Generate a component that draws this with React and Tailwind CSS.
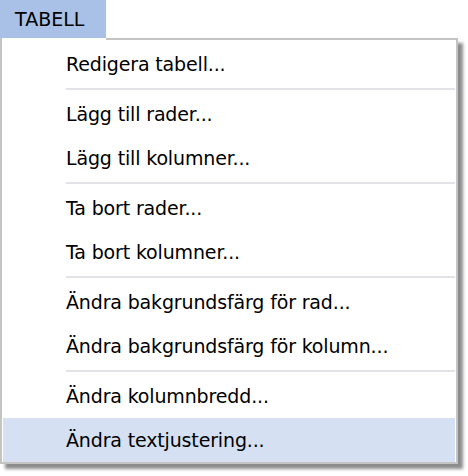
import React from "react";

const groups = [
  ["Redigera tabell..."],
  ["Lägg till rader...", "Lägg till kolumner..."],
  ["Ta bort rader...", "Ta bort kolumner..."],
  ["Ändra bakgrundsfärg för rad...", "Ändra bakgrundsfärg för kolumn..."],
  ["Ändra kolumnbredd...", "Ändra textjustering..."],
];

export default function App() {
  return (
    <div
      className="w-[468px] h-[476px] bg-white text-black"
      style={{ fontFamily: '"DejaVu Sans", sans-serif' }}
    >
      <div className="w-[106px] h-[38px] bg-[#a9c1e6] flex items-center pl-[15px] text-[19px] leading-none">
        TABELL
      </div>
      <div className="w-[458px] border-2 border-t-0 border-[#c4c4c4] bg-white shadow-[5px_5px_3px_rgba(0,0,0,0.45)]">
        <div className="flex h-[2px]">
          <div className="w-[104px]" />
          <div className="flex-1 bg-[#c4c4c4]" />
        </div>
        <div className="px-[1px] pt-[2px] pb-[0px]">
          {groups.map((g, gi) => (
            <div key={gi}>
              {gi > 0 && (
                <div className="h-[6px] flex items-center pl-[63px]">
                  <div className="h-[2px] w-full bg-[#e2e2e8]" />
                </div>
              )}
              {g.map((t) => (
                <div
                  key={t}
                  className={
                    "h-[44px] flex items-center pl-[63px] text-[19px] tracking-[-0.15px] " +
                    (t === "Ändra textjustering..." ? "bg-[#d5e0f2]" : "")
                  }
                >
                  {t}
                </div>
              ))}
            </div>
          ))}
        </div>
      </div>
    </div>
  );
}
